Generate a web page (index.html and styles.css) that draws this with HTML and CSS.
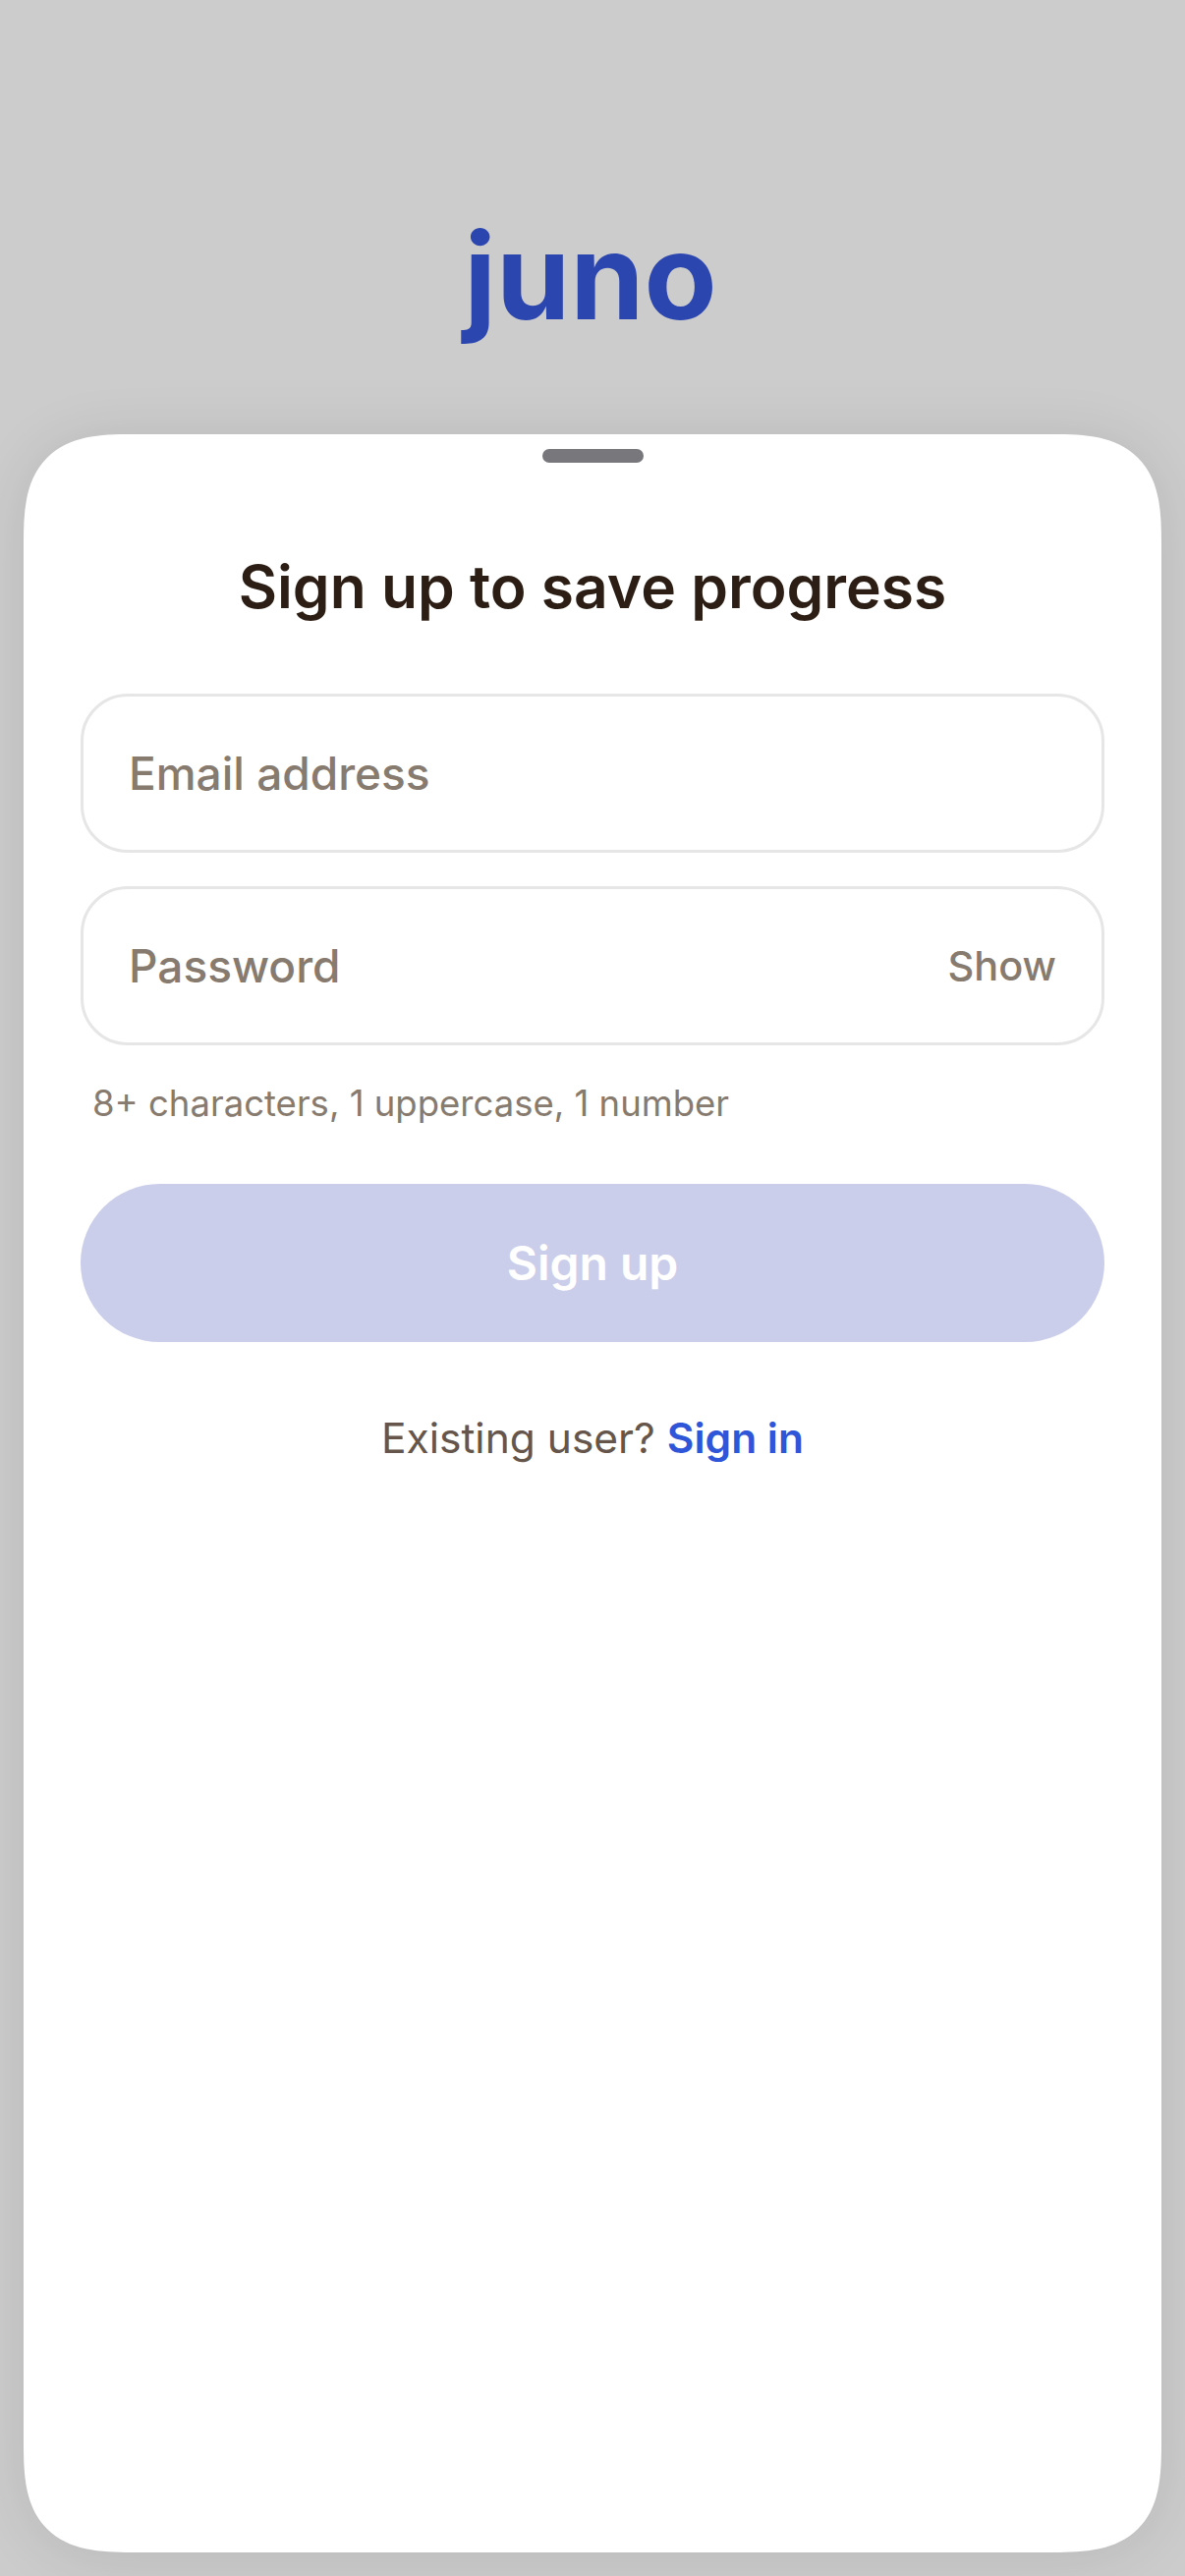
FILE: index.html

```html
<!DOCTYPE html>
<html lang="en">
<head>
    <meta charset="UTF-8">
    <title>Juno</title>
    <link rel="stylesheet" href="styles.css">
</head>
<body>
    <div class="wrap">
        <div class="logo_area">
            <h1 class="logo">juno</h1>
        </div>
        <!-- sign up sheet -->
        <div class="sheet">
            <div class="handle"></div>
            <h2 class="title">Sign up to save progress</h2>
            <div class="field">
                <span class="placeholder">Email address</span>
            </div>
            <div class="field field_pw">
                <span class="placeholder">Password</span>
                <span class="btn_show">Show</span>
            </div>
            <p class="hint">8+ characters, 1 uppercase, 1 number</p>
            <div class="btn_signup">Sign up</div>
            <p class="existing">Existing user? <a class="link" href="#">Sign in</a></p>
        </div>
    </div>
</body>
</html>
```

FILE: styles.css

```css
html, body, div, span,
h1, h2, p, a {
    margin: 0;
    padding: 0;
    border: 0;
}
html, body {
    height: 100%;
}
body {
    font-family: "Inter", "Noto Sans", sans-serif;
    background-color: #cccccc;
    overflow: hidden;
}
.wrap {
    display: flex;
    flex-direction: column;
    height: 2622px;
}
.logo_area {
    display: flex;
    justify-content: center;
    height: 442px;
    padding-top: 206px;
    padding-right: 4px;
    box-sizing: border-box;
}
.logo {
    font-size: 121px;
    line-height: 150px;
    font-weight: 700;
    color: #2c46b0;
    letter-spacing: 0;
}
.sheet {
    display: flex;
    flex-direction: column;
    box-sizing: border-box;
    height: 2156px;
    margin: 0 24px;
    padding: 15px 58px 0;
    background-color: #fff;
    border-radius: 110px;
    corner-shape: superellipse(1.5);
    box-shadow: 0 4px 60px rgba(0, 0, 0, 0.1);
}
.handle {
    align-self: center;
    width: 103px;
    height: 14px;
    border-radius: 7px;
    background-color: #77777c;
}
.title {
    margin-top: 91px;
    font-size: 60.5px;
    line-height: 70px;
    font-weight: 600;
    color: #2c1e14;
    text-align: center;
}
.field {
    display: flex;
    justify-content: space-between;
    align-items: center;
    box-sizing: border-box;
    height: 162px;
    margin-top: 34px;
    padding: 0 46px;
    border: 3px solid #e6e6e6;
    border-radius: 48px;
}
.title + .field {
    margin-top: 74px;
}
.placeholder {
    font-size: 46px;
    font-weight: 500;
    color: #877a6e;
}
.btn_show {
    font-size: 41.5px;
    font-weight: 500;
    color: #877a6e;
}
.hint {
    margin-top: 36px;
    padding-left: 12px;
    font-size: 36.5px;
    line-height: 46px;
    color: #877a6e;
}
.btn_signup {
    display: flex;
    justify-content: center;
    align-items: center;
    height: 161px;
    margin-top: 59px;
    border-radius: 81px;
    background-color: #cbceeb;
    color: #fff;
    font-size: 48px;
    font-weight: 600;
}
.existing {
    margin-top: 70px;
    font-size: 42.5px;
    line-height: 56px;
    color: #66554a;
    text-align: center;
}
.link {
    color: #2f55d8;
    font-weight: 600;
    text-decoration: none;
}
```
